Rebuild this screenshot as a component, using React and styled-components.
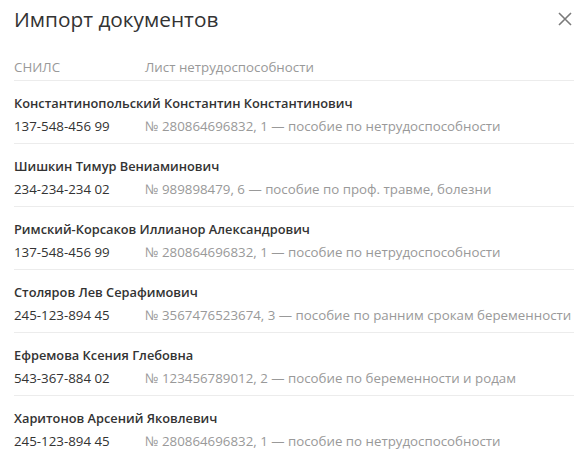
import styled, { createGlobalStyle } from "styled-components"

const GlobalStyle = createGlobalStyle`
  body {
    margin: 0;
    background: #ffffff;
    font-family: "Open Sans", "Noto Sans", sans-serif;
  }
`

const rows = [
  { name: "Константинопольский Константин Константинович", snils: "137-548-456 99", doc: "№ 280864696832, 1 — пособие по нетрудоспособности" },
  { name: "Шишкин Тимур Вениаминович", snils: "234-234-234 02", doc: "№ 989898479, 6 — пособие по проф. травме, болезни" },
  { name: "Римский-Корсаков Иллианор Александрович", snils: "137-548-456 99", doc: "№ 280864696832, 1 — пособие по нетрудоспособности" },
  { name: "Столяров Лев Серафимович", snils: "245-123-894 45", doc: "№ 3567476523674, 3 — пособие по ранним срокам беременности" },
  { name: "Ефремова Ксения Глебовна", snils: "543-367-884 02", doc: "№ 123456789012, 2 — пособие по беременности и родам" },
  { name: "Харитонов Арсений Яковлевич", snils: "245-123-894 45", doc: "№ 280864696832, 1 — пособие по нетрудоспособности" },
]

export default function App() {
  return (
    <>
      <GlobalStyle />
      <Dialog>
        <Header>
          <Title>Импорт документов</Title>
          <CloseButton aria-label="Закрыть">
            <svg width="14" height="14" viewBox="0 0 14 14">
              <path d="M1 1 L13 13 M13 1 L1 13" stroke="#7a7a7a" strokeWidth="1.6" />
            </svg>
          </CloseButton>
        </Header>
        <HeadRow>
          <HeadCell>СНИЛС</HeadCell>
          <HeadCell>Лист нетрудоспособности</HeadCell>
        </HeadRow>
        {rows.map((r, i) => (
          <Row key={i} last={i === rows.length - 1}>
            <Name>{r.name}</Name>
            <Line>
              <Snils>{r.snils}</Snils>
              <Doc>{r.doc}</Doc>
            </Line>
          </Row>
        ))}
      </Dialog>
    </>
  )
}

const Dialog = styled.div`
  width: 588px;
  height: 466px;
  box-sizing: border-box;
  padding: 0 14px;
  overflow: hidden;
  background: #fff;
`

const Header = styled.div`
  display: flex;
  justify-content: space-between;
  align-items: center;
  height: 38px;
`

const Title = styled.h1`
  margin: 0;
  font-size: 20.8px;
  font-weight: 400;
  color: #333;
`

const CloseButton = styled.button`
  border: none;
  background: none;
  padding: 0;
  width: 14px;
  height: 14px;
  margin-right: 2px;
  display: flex;
  cursor: pointer;
`

const HeadRow = styled.div`
  display: grid;
  grid-template-columns: 131px 1fr;
  align-content: end;
  height: 43px;
  padding-bottom: 3px;
  box-sizing: border-box;
  border-bottom: 1px solid #ececec;
`

const HeadCell = styled.span`
  font-size: 13.3px;
  color: #999;
  line-height: 20px;
`

const Row = styled.div`
  display: flex;
  flex-direction: column;
  gap: 3px;
  padding: 12px 0 7px;
  border-bottom: ${p => (p.last ? "none" : "1px solid #ececec")};
`

const Name = styled.div`
  font-size: 12.8px;
  font-weight: 600;
  color: #333;
  line-height: 20px;
`

const Line = styled.div`
  display: grid;
  grid-template-columns: 131px 1fr;
  line-height: 20px;
  font-size: 13.3px;
  white-space: nowrap;
`

const Snils = styled.span`
  color: #333;
`

const Doc = styled.span`
  color: #999;
`
